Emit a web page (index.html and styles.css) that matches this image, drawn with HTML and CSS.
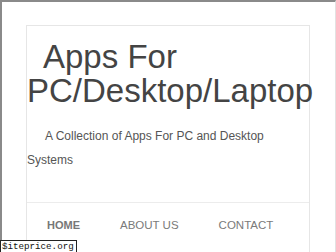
FILE: index.html
```html
<!DOCTYPE html>
<html lang="en">
<head>
    <meta charset="UTF-8">
    <meta name="viewport" content="width=device-width, initial-scale=1.0">
    <title>Apps For PC/Desktop/Laptop</title>
    <link rel="stylesheet" href="styles.css">
</head>
<body>
    <div class="frame">
        <div class="site">
            <div class="site-header">
                <h1 class="site-title">Apps For <span class="nobreak">PC/Desktop/Laptop</span></h1>
                <p class="site-tagline">A Collection of Apps For PC and Desktop Systems</p>
            </div>

            <ul class="main-nav">
                <li class="active">HOME</li>
                <li>ABOUT US</li>
                <li>CONTACT</li>
            </ul>
        </div>
    </div>

    <div class="watermark">$iteprice.org</div>
</body>
</html>
```

FILE: styles.css
```css
* {
    margin: 0;
    padding: 0;
    box-sizing: border-box;
}

body {
    font-family: "Liberation Sans", Arial, sans-serif;
    background: #fff;
    color: #444;
    overflow: hidden;
}

.frame {
    height: 252px;
    border-top: 2px solid #8a8a8a;
    border-left: 2px solid #8a8a8a;
    border-right: 1px solid #e2e2e2;
    padding: 23px 25px 0 24px;
}

.site {
    height: 100%;
    border: 1px solid #e6e6e6;
    border-bottom: none;
}

.site-header {
    padding: 14px 0 30px 0;
}

.site-title {
    font-size: 33px;
    font-weight: normal;
    line-height: 34px;
    text-indent: 16px;
    color: #444;
}

.nobreak {
    white-space: nowrap;
}

.site-tagline {
    margin-top: 16px;
    font-size: 12px;
    line-height: 24px;
    text-indent: 18px;
    color: #555;
}

.main-nav {
    list-style: none;
    display: flex;
    border-top: 1px solid #ececec;
    padding: 15px 0 0 0;
}

.main-nav li {
    padding: 0 20px;
    font-size: 11.5px;
    line-height: 14px;
    color: #7a7a7a;
}

.main-nav li.active {
    font-weight: bold;
    font-size: 11px;
    color: #777;
}

.watermark {
    position: absolute;
    left: 0;
    bottom: -2px;
    background: #fff;
    border: 1px solid #222;
    font-family: "Liberation Mono", "Courier New", monospace;
    font-size: 9.2px;
    line-height: 12px;
    padding: 0 2px 0 1px;
    color: #111;
}
```
